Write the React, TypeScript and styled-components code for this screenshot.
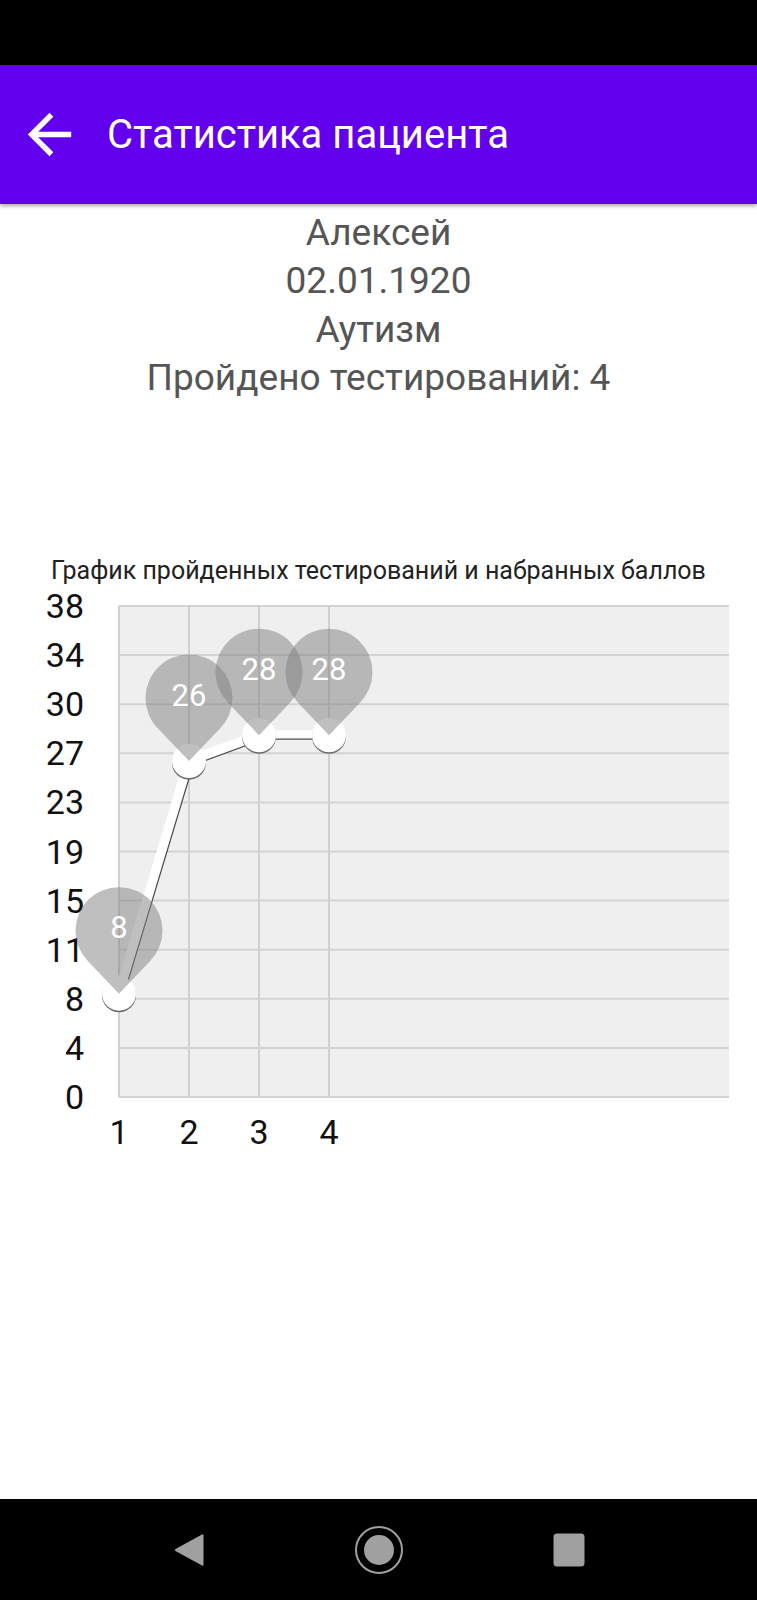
import React from "react";
import styled, { createGlobalStyle } from "styled-components";

const GlobalStyle = createGlobalStyle`
  html, body {
    margin: 0;
    padding: 0;
    background: #fff;
  }
  body {
    font-family: Roboto, "Noto Sans", sans-serif;
  }
`;

const patient = {
  name: "Алексей",
  birth: "02.01.1920",
  diagnosis: "Аутизм",
  tests: 4,
};

const scores = [8, 26, 28, 28];
const yLabels = ["38", "34", "30", "27", "23", "19", "15", "11", "8", "4", "0"];

// chart geometry, in page pixels (svg viewBox starts at CHART_TOP)
const CHART_TOP = 586;
const PLOT_LEFT = 119;
const PLOT_RIGHT = 729;
const PLOT_TOP = 606;
const PLOT_BOTTOM = 1097;
const MAX_Y = 38;
const STEP_X = 70;

const toY = (v: number) => PLOT_BOTTOM - (v / MAX_Y) * (PLOT_BOTTOM - PLOT_TOP);
const toX = (i: number) => PLOT_LEFT + i * STEP_X;

const pinPath = (cx: number, tipY: number) => {
  const R = 43.5;
  const d = 63;
  const cy = tipY - d;
  const k = R * Math.SQRT1_2;
  return `M${cx} ${tipY} L${cx - k} ${cy + k} A${R} ${R} 0 1 1 ${cx + k} ${cy + k} Z`;
};

const ScoreChart: React.FC = () => {
  const pts = scores.map((v, i) => ({ x: toX(i), y: toY(v), v }));
  const line = pts.map((p) => `${p.x},${p.y}`).join(" ");
  const shadow = pts.map((p) => `${p.x + 4},${p.y + 4}`).join(" ");
  const rowH = (PLOT_BOTTOM - PLOT_TOP) / (yLabels.length - 1);

  return (
    <ChartSvg viewBox={`0 ${CHART_TOP} 757 580`}>
      <rect
        x={PLOT_LEFT}
        y={PLOT_TOP}
        width={PLOT_RIGHT - PLOT_LEFT}
        height={PLOT_BOTTOM - PLOT_TOP}
        fill="#efefef"
      />
      {yLabels.map((label, i) => {
        const y = PLOT_TOP + i * rowH;
        return (
          <g key={label}>
            <line x1={PLOT_LEFT} x2={PLOT_RIGHT} y1={y} y2={y} stroke="#d3d3d3" strokeWidth={2} />
            <AxisText x={84} y={y} textAnchor="end" dominantBaseline="central">
              {label}
            </AxisText>
          </g>
        );
      })}
      {scores.map((_, i) => (
        <g key={i}>
          <line x1={toX(i)} x2={toX(i)} y1={PLOT_TOP} y2={PLOT_BOTTOM} stroke="#d0d0d0" strokeWidth={2} />
          <AxisText x={toX(i)} y={1132} textAnchor="middle" dominantBaseline="central">
            {i + 1}
          </AxisText>
        </g>
      ))}
      <polyline points={line} fill="none" stroke="#fff" strokeWidth={10} strokeLinejoin="round" />
      <polyline points={shadow} fill="none" stroke="#4a4a4a" strokeWidth={1.2} />
      {pts.map((p, i) => (
        <g key={i}>
          <circle cx={p.x} cy={p.y + 1.6} r={17} fill="#6a6a6a" />
          <circle cx={p.x} cy={p.y} r={17} fill="#fff" />
        </g>
      ))}
      {pts.map((p, i) => (
        <g key={i}>
          <path d={pinPath(p.x, p.y)} fill="rgba(128,128,128,0.5)" />
          <PinText x={p.x} y={p.y - 66} textAnchor="middle" dominantBaseline="central">
            {p.v}
          </PinText>
        </g>
      ))}
    </ChartSvg>
  );
};

export default function App() {
  return (
    <>
      <GlobalStyle />
      <Screen>
        <StatusBar />
        <AppBar>
          <BackButton>
            <svg width="65" height="65" viewBox="0 0 24 24">
              <path
                fill="#fff"
                d="M20 11H7.83l5.59-5.59L12 4l-8 8 8 8 1.41-1.41L7.83 13H20v-2z"
              />
            </svg>
          </BackButton>
          <Title>Статистика пациента</Title>
        </AppBar>
        <Info>
          <InfoLine>{patient.name}</InfoLine>
          <InfoLine>{patient.birth}</InfoLine>
          <InfoLine>{patient.diagnosis}</InfoLine>
          <InfoLine>Пройдено тестирований: {patient.tests}</InfoLine>
        </Info>
        <ChartTitle>График пройденных тестирований и набранных баллов</ChartTitle>
        <ScoreChart />
        <Filler />
        <NavBar>
          <NavSlot>
            <svg width="32" height="36" viewBox="0 0 32 36">
              <path
                d="M29 2.5 Q30.5 1.5 30.5 3.5 V32.5 Q30.5 34.5 29 33.5 L2.5 19 Q1.2 18 2.5 17 Z"
                fill="#a0a0a0"
              />
            </svg>
          </NavSlot>
          <NavSlot>
            <svg width="50" height="50" viewBox="0 0 50 50">
              <circle cx="25" cy="25" r="23" fill="none" stroke="#a0a0a0" strokeWidth="2" />
              <circle cx="25" cy="25" r="15" fill="#a0a0a0" />
            </svg>
          </NavSlot>
          <NavSlot>
            <svg width="32" height="34" viewBox="0 0 32 34">
              <rect x="0.5" y="0.5" width="31" height="33" rx="3.5" fill="#a0a0a0" />
            </svg>
          </NavSlot>
        </NavBar>
      </Screen>
    </>
  );
}

const Screen = styled.div`
  width: 757px;
  height: 1600px;
  display: flex;
  flex-direction: column;
  overflow: hidden;
  background: #fff;
`;

const StatusBar = styled.div`
  height: 65px;
  flex-shrink: 0;
  background: #000;
`;

const AppBar = styled.header`
  height: 139px;
  flex-shrink: 0;
  display: flex;
  align-items: center;
  background: #6200ee;
  box-shadow: 0 2px 4px rgba(0, 0, 0, 0.35);
  position: relative;
  z-index: 1;
`;

const BackButton = styled.div`
  width: 65px;
  height: 65px;
  margin-left: 17px;
  display: flex;
  svg {
    display: block;
  }
`;

const Title = styled.h1`
  margin: 0 0 0 25px;
  font-family: Roboto, sans-serif;
  font-weight: 400;
  font-size: 40px;
  line-height: 1;
  color: #fff;
`;

const Info = styled.section`
  padding-top: 5px;
  display: flex;
  flex-direction: column;
  align-items: center;
`;

const InfoLine = styled.div`
  font-size: 37px;
  line-height: 48.3px;
  color: #555;
`;

const ChartTitle = styled.div`
  margin-top: 154px;
  font-size: 25px;
  line-height: 30px;
  color: #222;
  text-align: center;
`;

const ChartSvg = styled.svg`
  display: block;
  width: 757px;
  height: 580px;
  flex-shrink: 0;
`;

const AxisText = styled.text`
  font-family: Roboto, sans-serif;
  font-size: 34px;
  fill: #111;
`;

const PinText = styled.text`
  font-family: Roboto, sans-serif;
  font-size: 31px;
  fill: #fff;
`;

const Filler = styled.div`
  flex: 1;
`;

const NavBar = styled.nav`
  height: 101px;
  flex-shrink: 0;
  display: flex;
  justify-content: center;
  align-items: center;
  gap: 130px;
  background: #000;
`;

const NavSlot = styled.div`
  width: 60px;
  height: 60px;
  display: flex;
  align-items: center;
  justify-content: center;
`;
